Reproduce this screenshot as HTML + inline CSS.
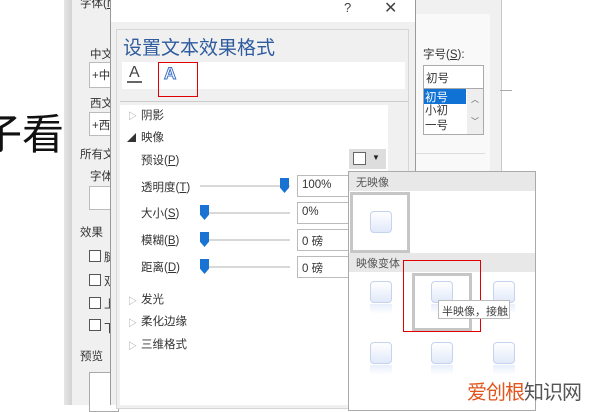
<!DOCTYPE html>
<html><head><meta charset="utf-8"><style>
*{margin:0;padding:0;box-sizing:border-box}
body{width:600px;height:405px;overflow:hidden;position:relative;background:#fff;font-family:"Liberation Sans","Noto Sans CJK SC",sans-serif;font-size:11px;color:#333}
.a{position:absolute}
.cb{position:absolute;width:12px;height:12px;border:1px solid #555;background:#fff}
.sl{position:absolute;height:2px;background:#d8d8d8}
.th{position:absolute;width:9px;height:15px;background:#1873d3;clip-path:polygon(0 0,100% 0,100% 65%,50% 100%,0 65%)}
.in{position:absolute;height:22px;border:1px solid #bbb;background:#fff;padding:3px 4px;font-size:11.5px}
.ic{position:absolute;width:22px;height:22px;border:1px solid #c5d3ef;border-radius:4px;background:linear-gradient(#fff,#e1e9f9)}
.rf{position:absolute;width:22px;height:10px;background:linear-gradient(#e8eefb,rgba(255,255,255,0));border-radius:0 0 4px 4px}
.tri{position:absolute;color:#999;font-size:9px}
</style></head><body>
<div class="a" style="top:102px;font-size:42px;color:#111;font-family:'Noto Sans CJK SC',sans-serif;left:-20px;line-height:60px">子看</div>
<div class="a" style="left:64px;top:0;width:8px;height:405px;background:linear-gradient(90deg,#e6e6e6,#d2d2d2)"></div>
<div class="a" style="left:72px;top:0;width:430px;height:405px;background:#f0f0f0;border-right:1px solid #c8c8c8"></div>
<div class="a" style="left:80px;top:-5px;font-size:11.5px">字体(<u>N</u>)</div>
<div class="a" style="left:90px;top:46px;font-size:11.5px">中文</div>
<div class="a" style="left:89px;top:62px;width:30px;height:26px;border:1px solid #bbb;background:#fff;padding:4px 2px;font-size:11.5px">+中</div>
<div class="a" style="left:90px;top:95px;font-size:11.5px">西文</div>
<div class="a" style="left:89px;top:112px;width:30px;height:24px;border:1px solid #bbb;background:#fff;padding:4px 2px;font-size:11.5px">+西</div>
<div class="a" style="left:80px;top:146px;font-size:11.5px">所有文</div>
<div class="a" style="left:90px;top:168px;font-size:11.5px">字体</div>
<div class="a" style="left:89px;top:186px;width:30px;height:24px;border:1px solid #bbb;background:#fff"></div>
<div class="a" style="left:80px;top:224px;font-size:11.5px">效果</div>
<div class="cb" style="left:89px;top:250px"></div><div class="cb" style="left:89px;top:274px"></div><div class="cb" style="left:89px;top:297px"></div><div class="cb" style="left:89px;top:319px"></div>
<div class="a" style="left:104px;top:247px;font-size:11.5px;line-height:23.5px">腿<br>双<br>上<br>下</div>
<div class="a" style="left:80px;top:348px;font-size:11.5px">预览</div>
<div class="a" style="left:89px;top:372px;width:30px;height:40px;border:1px solid #aaa;background:#fff"></div>
<div class="a" style="left:415px;top:14px;width:75px;height:391px;background:#f9f9f9"></div>
<div class="a" style="left:423px;top:46px;font-size:11.5px">字号(<u>S</u>):</div>
<div class="a" style="left:423px;top:65px;width:61px;height:24px;border:1px solid #aaa;background:#fff;padding:4px 2px;font-size:11.5px">初号</div>
<div class="a" style="left:423px;top:88px;width:61px;height:47px;border:1px solid #aaa;background:#fff"></div>
<div class="a" style="left:424px;top:89px;width:42px;height:15px;background:#0f72d4;color:#fff;font-size:11.5px;padding-left:1px">初号</div>
<div class="a" style="left:425px;top:104px;font-size:11.5px;line-height:15px">小初<br>一号</div>
<div class="a" style="left:467px;top:89px;width:16px;height:45px;background:#eee;color:#555;font-size:8px;text-align:center;line-height:22px">︿<br>﹀</div>
<div class="a" style="left:415px;top:153px;width:70px;height:1px;background:#ddd"></div>
<div class="a" style="left:500px;top:90px;width:12px;height:1px;background:#aaa"></div>
<div class="a" style="left:110px;top:0;width:306px;height:405px;background:#f0f0f0;border-left:1px solid #999;border-right:1px solid #999"></div>
<div class="a" style="left:111px;top:0;width:304px;height:22px;background:#fff"></div>
<div class="a" style="left:344px;top:0;font-size:13px;color:#444">?</div>
<div class="a" style="left:384px;top:-2px;font-size:16px;color:#444">✕</div>
<div class="a" style="left:116px;top:29px;width:293px;height:380px;border:1px solid #d6d6d6;background:#f0f0f0"></div>
<div class="a" style="left:123px;top:33px;font-size:19px;color:#2e5b9e;font-family:'Noto Sans CJK SC',sans-serif">设置文本效果格式</div>
<div class="a" style="left:122px;top:62px;width:283px;height:27px;background:#fff"></div>
<div class="a" style="left:127px;top:64px;font-size:16px;color:#444;border-bottom:2px solid #666;line-height:17px;padding:0 2px">A</div>
<div class="a" style="left:164px;top:64px;font-size:17px;color:#fff;-webkit-text-stroke:1px #3c6fc4;font-weight:bold">A</div>
<div class="a" style="left:158px;top:62px;width:40px;height:35px;border:1px solid #e00000"></div>
<div class="a" style="left:120px;top:101px;width:289px;height:1px;background:#ccc"></div>
<div class="a" style="left:120px;top:105px;width:268px;height:300px;background:#fff"></div>
<div class="tri" style="left:128px;top:109px">▷</div><div class="a" style="left:141px;top:107px;font-size:11.5px">阴影</div>
<div class="a" style="left:127px;top:131px;font-size:9px;color:#333">◢</div><div class="a" style="left:141px;top:129px;font-size:11.5px">映像</div>
<div class="a" style="left:141px;top:152px;font-size:11.5px">预设(<u>P</u>)</div>
<div class="a" style="left:349px;top:149px;width:37px;height:20px;background:#ddd"></div>
<div class="a" style="left:353px;top:152px;width:13px;height:13px;border:1px solid #666;background:#fff"></div>
<div class="a" style="left:372px;top:153px;font-size:8px;color:#222">▼</div>
<div class="a" style="left:141px;top:179px;font-size:11.5px">透明度(<u>T</u>)</div>
<div class="sl" style="left:200px;top:185px;width:90px"></div><div class="th" style="left:280px;top:178px"></div>
<div class="in" style="left:297px;top:175px;width:60px">100%</div>
<div class="a" style="left:141px;top:205px;font-size:11.5px">大小(<u>S</u>)</div>
<div class="sl" style="left:200px;top:212px;width:90px"></div><div class="th" style="left:200px;top:205px"></div>
<div class="in" style="left:297px;top:202px;width:60px">0%</div>
<div class="a" style="left:141px;top:232px;font-size:11.5px">模糊(<u>B</u>)</div>
<div class="sl" style="left:200px;top:239px;width:90px"></div><div class="th" style="left:200px;top:232px"></div>
<div class="in" style="left:297px;top:229px;width:60px">0 磅</div>
<div class="a" style="left:141px;top:259px;font-size:11.5px">距离(<u>D</u>)</div>
<div class="sl" style="left:200px;top:266px;width:90px"></div><div class="th" style="left:200px;top:259px"></div>
<div class="in" style="left:297px;top:256px;width:60px">0 磅</div>
<div class="tri" style="left:128px;top:294px">▷</div><div class="a" style="left:141px;top:291px;font-size:11.5px">发光</div>
<div class="tri" style="left:128px;top:316px">▷</div><div class="a" style="left:141px;top:313px;font-size:11.5px">柔化边缘</div>
<div class="tri" style="left:128px;top:339px">▷</div><div class="a" style="left:141px;top:336px;font-size:11.5px">三维格式</div>
<div class="a" style="left:348px;top:171px;width:188px;height:240px;background:#fff;border:1px solid #aaa"></div>
<div class="a" style="left:349px;top:172px;width:186px;height:19px;background:#e8e8e8;padding:2px 7px;color:#555;font-size:11px">无映像</div>
<div class="a" style="left:350px;top:192px;width:60px;height:61px;border:3px solid #c6c6c6"></div>
<div class="ic" style="left:370px;top:211px"></div>
<div class="a" style="left:349px;top:253px;width:186px;height:19px;background:#e8e8e8;padding:2px 7px;color:#555;font-size:11px">映像变体</div>
<div class="a" style="left:412px;top:273px;width:60px;height:58px;border:3px solid #c6c6c6"></div>
<div class="ic" style="left:370px;top:281px"></div><div class="rf" style="left:370px;top:304px"></div>
<div class="ic" style="left:431px;top:281px"></div><div class="rf" style="left:431px;top:304px"></div>
<div class="ic" style="left:493px;top:281px"></div><div class="rf" style="left:493px;top:304px"></div>
<div class="ic" style="left:370px;top:342px"></div><div class="rf" style="left:370px;top:365px"></div>
<div class="ic" style="left:431px;top:342px"></div><div class="rf" style="left:431px;top:365px"></div>
<div class="ic" style="left:493px;top:342px"></div><div class="rf" style="left:493px;top:365px"></div>
<div class="a" style="left:403px;top:260px;width:78px;height:72px;border:1px solid #e00000"></div>
<div class="a" style="left:438px;top:300px;width:72px;height:19px;border:1px solid #bbb;background:#fff;font-size:11px;padding:2px 3px;color:#444;white-space:nowrap">半映像，接触</div>
<div class="a" style="left:467px;top:376px;font-size:20px;letter-spacing:-1px;white-space:nowrap"><span style="color:#e0561f">爱创根</span><span style="color:#555">知识网</span></div>
</body></html>
